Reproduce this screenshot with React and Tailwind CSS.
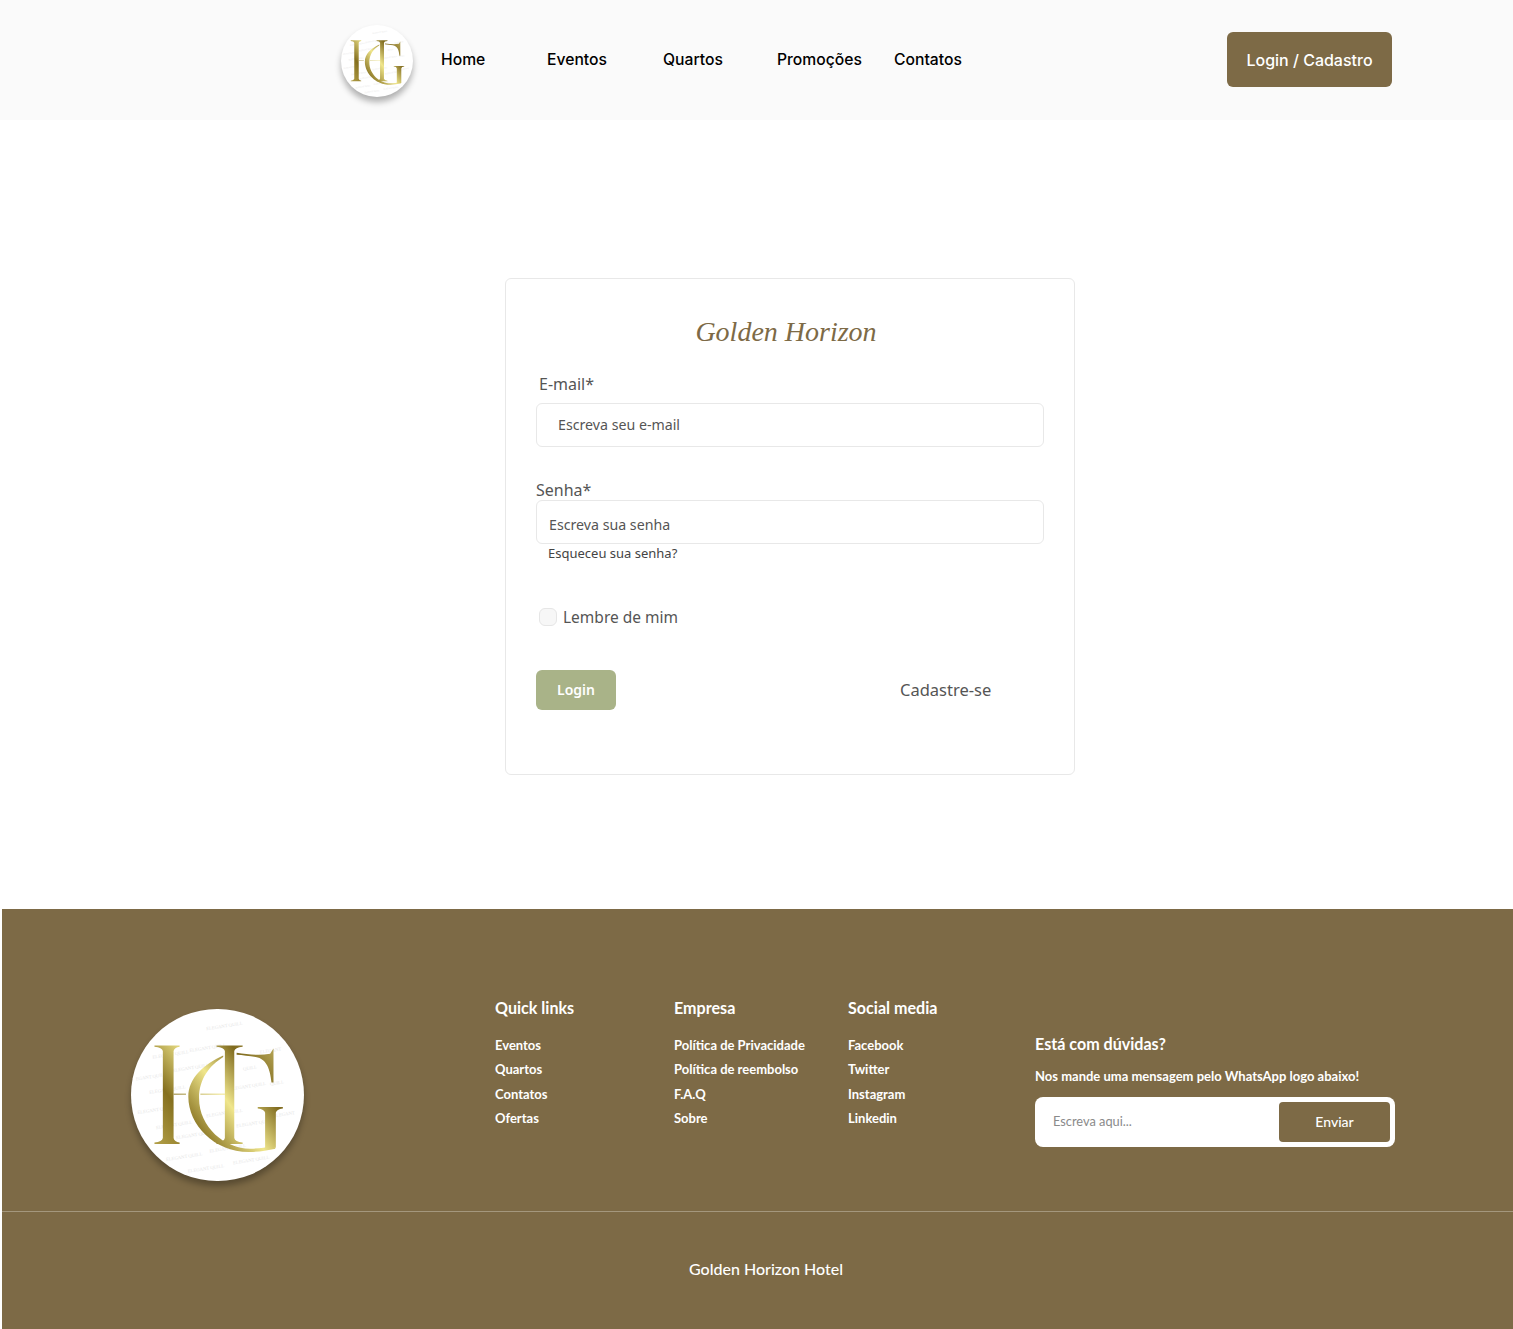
import React from 'react';

const navItems = [
  { label: 'Home', cls: 'ml-[28px] w-[106px]' },
  { label: 'Eventos', cls: 'w-[116px]' },
  { label: 'Quartos', cls: 'w-[114px]' },
  { label: 'Promoções', cls: 'w-[117px]' },
  { label: 'Contatos', cls: '' },
];

const footerCols = [
  { title: 'Quick links', width: 'w-[179px]', links: ['Eventos', 'Quartos', 'Contatos', 'Ofertas'] },
  { title: 'Empresa', width: 'w-[174px]', links: ['Política de Privacidade', 'Política de reembolso', 'F.A.Q', 'Sobre'] },
  { title: 'Social media', width: 'w-[187px]', links: ['Facebook', 'Twitter', 'Instagram', 'Linkedin'] },
];

const marks = [
  [130, 205, 'ELEGANT QUILL'], [290, 120, 'ELEGANT QUILL'], [240, 185, 'ELEGANT QUILL'], [450, 190, 'ELEGANT'],
  [80, 270, 'EGANT QUILL'], [190, 245, 'ELEGANT QUILL'], [400, 240, 'QUILL'], [120, 310, 'ELEGANT QUILL'],
  [360, 300, 'ELEGANT QUILL'], [85, 370, 'ELEGANT QUILL'], [290, 380, 'ELEGANT QUILL'], [140, 415, 'ELEGANT QUILL'],
  [380, 410, 'ELEGANT QUILL'], [200, 445, 'ELEGANT QUILL'], [170, 510, 'ELEGANT QUILL'], [300, 485, 'ELEGANT QUILL'],
  [235, 545, 'ELEGANT QUILL'], [370, 520, 'ELEGANT QUILL'], [480, 285, 'QUILL'], [490, 380, 'ELEGANT'],
];

function Logo({ id, className }) {
  return (
    <div className={`rounded-full bg-white shadow-[0_5px_6px_rgba(0,0,0,0.3)] shrink-0 ${className}`}>
      <svg viewBox="65 57 516 512" className="w-full h-full">
        <defs>
          <linearGradient id={id} x1="135" y1="460" x2="520" y2="170" gradientUnits="userSpaceOnUse">
            <stop offset="0" stopColor="#b3a048" />
            <stop offset="0.25" stopColor="#85701f" />
            <stop offset="0.52" stopColor="#f0e68c" />
            <stop offset="0.75" stopColor="#7f6a1e" />
            <stop offset="1" stopColor="#c4b464" />
          </linearGradient>
        </defs>
        <g fill="#e6e6e6" fontFamily="'Liberation Serif', serif" fontSize="14">
          {marks.map(([x, y, t], i) => (
            <text key={i} x={x} y={y} transform={`rotate(-9 ${x} ${y})`}>{t}</text>
          ))}
        </g>
        <g fill={`url(#${id})`}>
          <path d="M135 165H210V169Q194 171 192 182V441Q194 452 210 455V459H135V455Q158 452 160 441V182Q158 171 135 169Z" />
          <path d="M320 165H398V169Q375 171 373 182V441Q375 452 398 455V459H320V455Q343 452 345 441V182Q343 171 320 169Z" />
          <rect x="192" y="309" width="37" height="3" />
          <rect x="272" y="309" width="73" height="3" />
          <path d="M340 195C282 222 236 262 236 318C236 402 315 485 420 483C448 482 470 478 496 473L490 464C465 470 445 473 420 473C345 473 268 410 268 322C268 265 300 225 340 200Z" />
          <path d="M380 187C415 192 448 196 480 190L490 174V276H484C480 238 470 205 437 200C418 197 398 194 380 193Z" />
          <path d="M443 349H518V353Q499 355 497 366V470L465 472V366Q463 355 443 353Z" />
        </g>
      </svg>
    </div>
  );
}

function Field({ label, labelCls, placeholder, inputCls }) {
  return (
    <div>
      <label className={`block text-[16px] leading-[20px] text-[#555] ${labelCls}`}>{label}</label>
      <input
        readOnly
        placeholder={placeholder}
        className={`block w-full h-[44px] border border-[#e8e8e8] rounded-md bg-white text-[14.2px] font-['Noto_Sans',sans-serif] placeholder:text-[#555] outline-none ${inputCls}`}
      />
    </div>
  );
}

export default function App() {
  return (
    <div className="w-[1513px] min-h-[1329px] bg-white font-['Noto_Sans',sans-serif] overflow-hidden">
      <header className="h-[120px] bg-[#fafafa] flex items-center pl-[341px] pr-[121px]">
        <Logo id="hg-top" className="w-[72px] h-[72px] mt-[1px]" />
        <nav className="flex font-['Inter',sans-serif] font-medium text-[15.7px] text-black">
          {navItems.map(item => (
            <a key={item.label} className={item.cls}>{item.label}</a>
          ))}
        </nav>
        <button className="ml-auto w-[165px] h-[55px] mb-[1px] bg-[#7d6a46] text-white rounded-md font-['Inter',sans-serif] font-medium text-[16px]">
          Login / Cadastro
        </button>
      </header>

      <main className="h-[789px] pt-[158px] flex justify-center pl-[67px]">
        <div className="w-[570px] h-[497px] border border-[#e8e8e8] rounded-md px-[30px]">
          <h1 className="text-center pr-[8px] pt-[33px] h-[95px] font-['Liberation_Serif',serif] italic text-[28px] leading-[40px] text-[#7d6a46]">
            Golden Horizon
          </h1>
          <Field label="E-mail*" labelCls="pl-[3px] mb-[9px]" placeholder="Escreva seu e-mail" inputCls="pl-[21px] pb-[1px]" />
          <div className="mt-[33px]">
            <Field label="Senha*" labelCls="mb-0" placeholder="Escreva sua senha" inputCls="pl-[12px] pt-[5px]" />
          </div>
          <a className="block pl-[12px] text-[13px] leading-[18px] text-[#444]">Esqueceu sua senha?</a>
          <label className="flex items-center mt-[45px] ml-[3px] gap-[6px] text-[15.5px] leading-[20px] text-[#555]">
            <span className="w-[18px] h-[18px] rounded-md border border-[#e6e6e6] bg-[#f7f7f7]" />
            Lembre de mim
          </label>
          <div className="flex items-center mt-[43px]">
            <button className="w-[80px] h-[40px] pb-[1px] bg-[#a9b388] rounded-md text-white text-[14px] font-semibold">Login</button>
            <a className="ml-[284px] text-[16.5px] text-[#555]">Cadastre-se</a>
          </div>
        </div>
      </main>

      <footer className="ml-[2px] h-[420px] bg-[#7d6a46] text-white font-['Lato',sans-serif]">
        <div className="h-[303px] border-b border-white/30 flex pl-[129px]">
          <Logo id="hg-foot" className="w-[173px] h-[172px] mt-[100px]" />
          <div className="flex ml-[191px] pt-[89px]">
            {footerCols.map(col => (
              <div key={col.title} className={col.width}>
                <h3 className="text-[16.1px] leading-[20px] font-bold mb-[19px]">{col.title}</h3>
                <ul className="text-[13px] leading-[16px] font-bold flex flex-col gap-[8.3px]">
                  {col.links.map(link => <li key={link}>{link}</li>)}
                </ul>
              </div>
            ))}
          </div>
          <div className="w-[360px] pt-[125px]">
            <h3 className="text-[16.1px] leading-[20px] font-bold">Está com dúvidas?</h3>
            <p className="mt-[14px] text-[13px] leading-[16px] font-bold">Nos mande uma mensagem pelo WhatsApp logo abaixo!</p>
            <form className="mt-[13px] h-[50px] bg-white rounded-lg flex items-center pl-[18px] pr-[5px]">
              <input readOnly placeholder="Escreva aqui..." className="flex-1 min-w-0 text-[12.8px] outline-none placeholder:text-[#8a8a8a]" />
              <button type="button" className="w-[111px] h-[40px] pb-[1px] bg-[#7d6a46] rounded-sm text-[14px] font-medium">Enviar</button>
            </form>
          </div>
        </div>
        <p className="pt-[47px] pl-[687px] text-[16px] leading-[20px] font-medium">Golden Horizon Hotel</p>
      </footer>
    </div>
  );
}
